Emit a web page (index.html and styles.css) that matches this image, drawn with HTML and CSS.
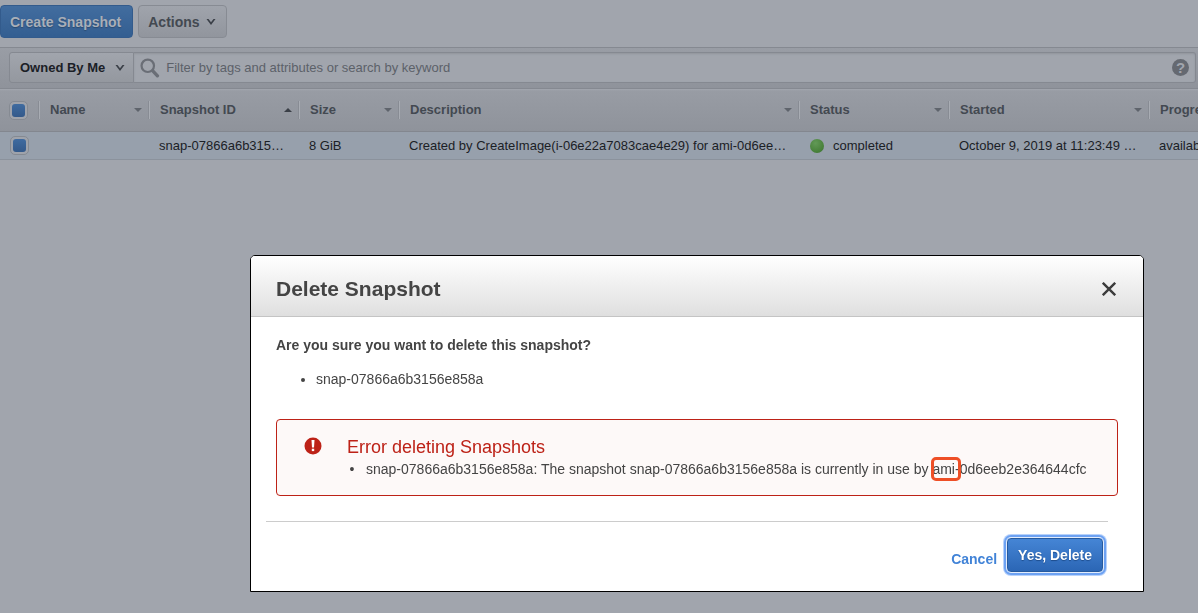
FILE: index.html
```html
<!DOCTYPE html>
<html lang="en">
<head>
<meta charset="utf-8">
<title>Snapshots</title>
<link rel="stylesheet" href="styles.css">
</head>
<body>
<main class="page">
  <div class="toolbar">
    <button class="btn btn-primary" type="button">Create Snapshot</button>
    <button class="btn btn-plain" type="button">Actions
      <svg class="chevron" viewBox="0 0 10 8" aria-hidden="true"><path d="M.5 1h2L5 4.200 7.500 1h2L5 7z"/></svg>
    </button>
  </div>
  <div class="filter">
    <button class="owner" type="button">Owned By Me
      <svg class="chevron" viewBox="0 0 10 8" aria-hidden="true"><path d="M.5 1h2L5 4.200 7.500 1h2L5 7z"/></svg>
    </button>
    <div class="search">
      <svg class="lens" viewBox="0 0 18 18" aria-hidden="true"><circle cx="7" cy="7" r="5.600" fill="none" stroke-width="2"/><path d="M11.500 11.500l4.200 4.500" stroke-width="3" stroke-linecap="round"/></svg>
      <input class="search-input" type="text" aria-label="Filter snapshots" placeholder="Filter by tags and attributes or search by keyword">
      <button class="help" type="button" aria-label="Help">?</button>
    </div>
  </div>
  <div class="grid-wrap">
    <table class="grid">
      <colgroup><col class="c-check"><col class="c-name"><col class="c-id"><col class="c-size"><col class="c-desc"><col class="c-status"><col class="c-started"><col class="c-progress"></colgroup>
      <thead>
        <tr>
          <th><input class="tick" type="checkbox" checked aria-label="Select all"></th>
          <th><div class="head">Name<span class="sort"></span></div></th>
          <th><div class="head">Snapshot ID<span class="sort sort-up"></span></div></th>
          <th><div class="head">Size<span class="sort"></span></div></th>
          <th><div class="head">Description<span class="sort"></span></div></th>
          <th><div class="head">Status<span class="sort"></span></div></th>
          <th><div class="head">Started<span class="sort"></span></div></th>
          <th><div class="head">Progress<span class="sort"></span></div></th>
        </tr>
      </thead>
      <tbody>
        <tr>
          <td><input class="tick" type="checkbox" checked aria-label="Select snap-07866a6b3156e858a"></td>
          <td></td>
          <td>snap-07866a6b315…</td>
          <td>8 GiB</td>
          <td>Created by CreateImage(i-06e22a7083cae4e29) for ami-0d6ee…</td>
          <td><div class="status"><span class="dot"></span>completed</div></td>
          <td>October 9, 2019 at 11:23:49 …</td>
          <td>available</td>
        </tr>
      </tbody>
    </table>
  </div>
</main>

<div class="overlay">
  <section class="dialog" role="dialog" aria-modal="true" aria-labelledby="dialog-title">
    <header class="dialog-head">
      <h1 class="dialog-title" id="dialog-title">Delete Snapshot</h1>
      <button class="close" type="button" aria-label="Close">
        <svg class="close-icon" viewBox="0 0 14 14" aria-hidden="true"><path d="M.8.8l12.400 12.400M13.200.8L.8 13.200"/></svg>
      </button>
    </header>
    <div class="dialog-body">
      <p class="question">Are you sure you want to delete this snapshot?</p>
      <ul class="targets"><li>snap-07866a6b3156e858a</li></ul>
      <div class="alert" role="alert">
        <svg class="alert-icon" viewBox="0 0 18 18" aria-hidden="true"><circle cx="9" cy="9" r="8.500" fill="#bd2217"/><path d="M7.500 3h3l-.5 7.400H8z" fill="#fff"/><rect x="7.800" y="11.700" width="2.400" height="2.400" fill="#fff"/></svg>
        <div class="alert-text">
          <h2 class="alert-title">Error deleting Snapshots</h2>
          <ul class="errors"><li>snap-07866a6b3156e858a: The snapshot snap-07866a6b3156e858a is currently in use by <span class="mark">ami-</span>0d6eeb2e364644cfc</li></ul>
        </div>
      </div>
    </div>
    <footer class="dialog-foot">
      <a class="cancel" href="#">Cancel</a>
      <button class="confirm" type="button">Yes, Delete</button>
    </footer>
  </section>
</div>
</body>
</html>
```
FILE: styles.css
```css
* { box-sizing: border-box; }

body {
  margin: 0;
  min-height: 100vh;
  overflow: hidden;
  background: #a1a5ad;
  color: #1b2026;
  font-family: "Liberation Sans", Arial, sans-serif;
  font-size: 13px;
}

button, input { font: inherit; }

.toolbar {
  display: flex;
  gap: 5px;
  padding: 5px 0 9px;
}

.btn {
  display: flex;
  align-items: center;
  gap: 6px;
  height: 33px;
  padding: 0 10px 0 9px;
  border-radius: 4px;
  font-size: 14px;
  font-weight: bold;
}

.btn-primary {
  padding-right: 11px;
  border: 1px solid #335b8c;
  background: linear-gradient(#426d9f, #335e91);
  color: #a9afb8;
  text-shadow: 0 1px 1px #2b4a70;
}

.btn-plain {
  border: 1px solid #878b93;
  background: linear-gradient(#a0a4ac, #91959d);
  color: #434951;
}

.chevron {
  width: 10px;
  height: 8px;
  fill: #3a3f47;
}

.filter {
  display: flex;
  padding: 4px 2px 5px 9px;
  border-top: 1px solid #858991;
  background: linear-gradient(#999da5, #8f939b);
}

.owner {
  display: flex;
  align-items: center;
  gap: 10px;
  height: 31px;
  padding: 0 8px 0 10px;
  border: 1px solid #858991;
  border-radius: 3px 0 0 3px;
  background: linear-gradient(#a1a5ad, #94989f);
  color: #1b2026;
  font-weight: bold;
  white-space: nowrap;
}

.search {
  display: flex;
  flex: 1;
  align-items: center;
  padding: 0 6px;
  border: 1px solid #858991;
  border-left: 0;
  border-radius: 0 3px 3px 0;
  background: #a1a5ad;
  box-shadow: inset 0 1px 2px #91959d;
}

.lens {
  width: 20px;
  height: 20px;
  fill: none;
  stroke: #6a6e76;
}

.search-input {
  flex: 1;
  padding: 0 6px;
  border: 0;
  outline: 0;
  background: transparent;
  color: #1b2026;
}

.search-input::placeholder { color: #5c6169; opacity: 1; }

.help {
  width: 17px;
  height: 17px;
  padding: 0;
  border: 0;
  border-radius: 50%;
  background: #656971;
  color: #a1a5ad;
  font-size: 15px;
  font-weight: bold;
  line-height: 17px;
}

.grid-wrap { overflow: hidden; }

.grid {
  width: 1300px;
  border-collapse: separate;
  border-spacing: 0;
  table-layout: fixed;
}

.c-check { width: 39px; }
.c-name { width: 110px; }
.c-size { width: 100px; }
.c-id, .c-status { width: 150px; }
.c-desc { width: 400px; }
.c-started { width: 200px; }

.grid th {
  height: 44px;
  padding: 0 0 1px;
  border-top: 1px solid #858991;
  border-bottom: 1px solid #83878f;
  background: linear-gradient(#a3a7af, #989ca4 2px, #8f939b);
  color: #434951;
  text-align: left;
}

.head {
  display: flex;
  align-items: center;
  justify-content: space-between;
  height: 18px;
  padding: 0 7px 0 10px;
  border-left: 1px solid #a8acb3;
  box-shadow: -1px 0 #888c94;
}

.sort {
  border: 4px solid transparent;
  border-top-color: #5f646c;
  border-bottom: 0;
}

.sort-up {
  border-top: 0;
  border-bottom: 4px solid #3a3f47;
}

.grid td {
  height: 28px;
  padding: 0 0 0 10px;
  border-bottom: 1px solid #8b929c;
  background: #97a0ac;
  white-space: nowrap;
}

.grid th:first-child { padding: 0 0 0 9px; }

.tick {
  display: block;
  width: 19px;
  height: 19px;
  margin: 0;
  padding: 2px;
  appearance: none;
  border: 1px solid #858a92;
  border-radius: 5px;
  background: #9fa3ab;
}

.tick:checked::before {
  content: "";
  display: block;
  height: 13px;
  border-radius: 3px;
  background: linear-gradient(#3f6ba0, #33598a);
}

.status {
  display: flex;
  align-items: center;
  gap: 9px;
  padding-left: 1px;
}

.dot {
  width: 14px;
  height: 14px;
  border-radius: 50%;
  background: radial-gradient(circle at 40% 30%, #629957, #48813b 65%, #3b6e32);
}

.overlay {
  position: fixed;
  inset: 0;
  padding: 255px 54px 0 250px;
}

.dialog {
  border: 1px solid #000;
  border-radius: 5px 5px 0 0;
  background: #fff;
  color: #444;
  font-size: 14px;
  overflow: hidden;
}

.dialog-head {
  display: flex;
  align-items: center;
  justify-content: space-between;
  padding: 20px 27px 14px 25px;
  border-bottom: 1px solid #c4c4c4;
  background: linear-gradient(#fff, #dfdfdf);
}

.dialog-title {
  margin: 0;
  font-size: 21px;
  line-height: 26px;
}

.close {
  display: flex;
  padding: 0;
  border: 0;
  background: none;
}

.close-icon {
  width: 14px;
  height: 14px;
  stroke: #3c3c3c;
  stroke-width: 2.4;
}

.dialog-body { padding: 18px 25px 25px; }

.question {
  margin: 0 0 14px;
  font-weight: bold;
  line-height: 20px;
}

.targets {
  margin: 0 0 30px;
  padding-left: 40px;
  line-height: 20px;
}

.alert {
  display: flex;
  gap: 25px;
  padding: 17px 25px 16px 27px;
  border: 1px solid #bd2217;
  border-radius: 4px;
  background: #fdf9f8;
}

.alert-icon {
  width: 18px;
  height: 18px;
}

.alert-title {
  margin: 0;
  padding-bottom: 2px;
  color: #bd2217;
  font-size: 18px;
  font-weight: normal;
  line-height: 20px;
}

.errors {
  margin: 0;
  padding-left: 19px;
  line-height: 20px;
  list-style-type: "•\00a0\00a0\00a0";
}

.mark {
  padding: 3px 0;
  border-radius: 4px;
  outline: 3px solid #ee4f26;
  outline-offset: -2px;
}

.dialog-foot {
  display: flex;
  align-items: center;
  justify-content: flex-end;
  gap: 10px;
  margin: 0 35px 0 15px;
  padding: 16px 5px 19px;
  border-top: 1px solid #ccc;
}

.cancel {
  padding-top: 8px;
  color: #4183d7;
  font-weight: bold;
  text-decoration: none;
}

.confirm {
  height: 34px;
  padding: 0 10px;
  border: 1px solid #265a9f;
  border-radius: 4px;
  background: linear-gradient(#4585d5, #2b66b5);
  box-shadow: 0 0 0 1px #e3edfc, 0 0 0 3px #6da2f3, 0 0 0 4px #b8d2fa;
  color: #fff;
  font-weight: bold;
  text-shadow: 0 1px 1px #1d4c8c;
}
```
